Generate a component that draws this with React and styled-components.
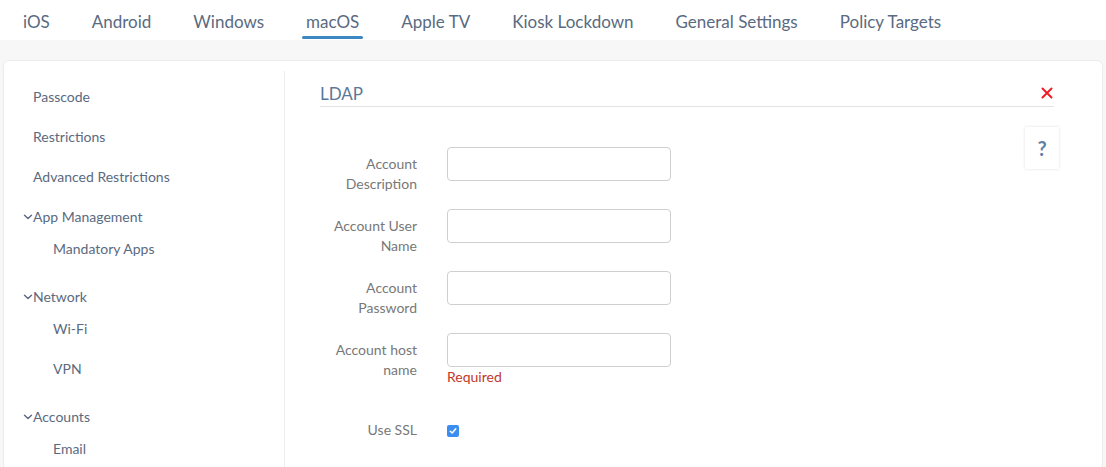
import React from "react";
import styled, { createGlobalStyle } from "styled-components";

const Global = createGlobalStyle`
  html, body { margin: 0; padding: 0; background: #f7f7f7; }
  body { font-family: Lato, "Open Sans", "Liberation Sans", sans-serif; -webkit-font-smoothing: antialiased; }
  * { box-sizing: border-box; }
`;

const Page = styled.div`
  width: 1106px;
  height: 467px;
  overflow: hidden;
  background: #f7f7f7;
  display: flex;
  flex-direction: column;
`;

const TabBar = styled.nav`
  height: 40px;
  background: #fff;
  display: flex;
  align-items: stretch;
  gap: 34px;
  padding-left: 19px;
  flex-shrink: 0;
`;

const Tab = styled.div`
  position: relative;
  padding: 3px 4px 0;
  font-size: 17px;
  line-height: 37px;
  height: 40px;
  color: #5a6a80;
  white-space: nowrap;
  &::after {
    content: "";
    display: ${(p) => (p.$active ? "block" : "none")};
    position: absolute;
    left: 0;
    right: 0;
    bottom: 1px;
    height: 3px;
    border-radius: 2px;
    background: #3d87c2;
  }
`;

const Area = styled.div`
  flex: 1;
  padding: 20px 3px 0 3px;
  display: flex;
`;

const Card = styled.div`
  flex: 1;
  min-height: 460px;
  background: #fff;
  border: 1px solid #ececec;
  border-radius: 6px;
  display: flex;
`;

const Sidebar = styled.aside`
  width: 281px;
  flex-shrink: 0;
  margin-top: 10px;
  border-right: 1px solid #ededed;
  padding: 5px 0 0 29px;
`;

const NavItem = styled.div`
  height: 40px;
  display: flex;
  align-items: center;
  font-size: 14px;
  color: #5a6a80;
  padding-left: ${(p) => (p.$sub ? "20px" : "0")};
`;

const Chevron = styled.svg`
  width: 10px;
  height: 6px;
  margin-left: -10px;
  margin-top: 1px;
  flex-shrink: 0;
`;

const SubList = styled.div`
  margin-top: -8px;
  margin-bottom: 8px;
`;

const Content = styled.section`
  flex: 1;
  display: flex;
  flex-direction: column;
  padding: 16px 0 0 35px;
`;

const Heading = styled.div`
  margin-right: 48px;
  height: 30px;
  border-bottom: 1px solid #e3e3e3;
  display: flex;
  align-items: center;
  justify-content: space-between;
  padding-top: 3px;
`;

const Title = styled.h2`
  margin: 0;
  font-size: 17px;
  font-weight: 400;
  color: #5b7898;
`;

const CloseX = styled.svg`
  width: 12px;
  height: 12px;
  margin-right: 1px;
`;

const Body = styled.div`
  display: flex;
  align-items: flex-start;
`;

const Form = styled.div`
  flex: 1;
  padding-top: 40px;
  display: flex;
  flex-direction: column;
  gap: 28px;
`;

const Row = styled.div`
  display: flex;
  align-items: flex-start;
  gap: 30px;
`;

const Label = styled.label`
  width: 97px;
  text-align: right;
  font-size: 14px;
  line-height: 20px;
  color: #787878;
  padding-top: ${(p) => p.$pt || "7px"};
  margin-bottom: -13px;
`;

const Field = styled.div`
  display: flex;
  flex-direction: column;
`;

const Input = styled.input`
  width: 224px;
  height: 34px;
  border: 1px solid #cfcfcf;
  border-radius: 4px;
  outline: none;
  font-family: inherit;
  font-size: 14px;
  padding: 0 10px;
`;

const ErrorText = styled.div`
  font-size: 14px;
  line-height: 20px;
  color: #c0392b;
`;

const Check = styled.span`
  width: 12px;
  height: 12px;
  margin-top: 10px;
  border-radius: 2px;
  background: #3b8eef;
  display: flex;
  align-items: center;
  justify-content: center;
`;

const HelpButton = styled.div`
  width: 34px;
  height: 42px;
  margin: 20px 43px 0 0;
  background: #fff;
  box-shadow: 0 0 3px rgba(0, 0, 0, 0.12);
  display: flex;
  align-items: center;
  justify-content: center;
  font-size: 20px;
  font-weight: 700;
  color: #5f80a3;
`;

const tabs = ["iOS", "Android", "Windows", "macOS", "Apple TV", "Kiosk Lockdown", "General Settings", "Policy Targets"];

const Down = () => (
  <Chevron viewBox="0 0 10 6">
    <path d="M1.5 1.2 L5 4.6 L8.5 1.2" fill="none" stroke="#5a6a80" strokeWidth="1.4" strokeLinecap="round" strokeLinejoin="round" />
  </Chevron>
);

export default function App() {
  return (
    <>
      <Global />
      <Page>
        <TabBar>
          {tabs.map((t) => (
            <Tab key={t} $active={t === "macOS"}>{t}</Tab>
          ))}
        </TabBar>
        <Area>
          <Card>
            <Sidebar>
              <NavItem>Passcode</NavItem>
              <NavItem>Restrictions</NavItem>
              <NavItem>Advanced Restrictions</NavItem>
              <NavItem><Down />App Management</NavItem>
              <SubList>
                <NavItem $sub>Mandatory Apps</NavItem>
              </SubList>
              <NavItem><Down />Network</NavItem>
              <SubList>
                <NavItem $sub>Wi-Fi</NavItem>
                <NavItem $sub>VPN</NavItem>
              </SubList>
              <NavItem><Down />Accounts</NavItem>
              <SubList>
                <NavItem $sub>Email</NavItem>
              </SubList>
            </Sidebar>
            <Content>
              <Heading>
                <Title>LDAP</Title>
                <CloseX viewBox="0 0 12 12">
                  <path d="M1.5 1.5 L10.5 10.5 M10.5 1.5 L1.5 10.5" stroke="#ee1c24" strokeWidth="2" strokeLinecap="round" />
                </CloseX>
              </Heading>
              <Body>
                <Form>
                  <Row>
                    <Label>Account Description</Label>
                    <Input />
                  </Row>
                  <Row>
                    <Label>Account User Name</Label>
                    <Input />
                  </Row>
                  <Row>
                    <Label>Account Password</Label>
                    <Input type="password" />
                  </Row>
                  <Row>
                    <Label>Account host name</Label>
                    <Field>
                      <Input />
                      <ErrorText>Required</ErrorText>
                    </Field>
                  </Row>
                  <Row>
                    <Label $pt="5px">Use SSL</Label>
                    <Check>
                      <svg width="8" height="8" viewBox="0 0 8 8">
                        <path d="M1.3 4.2 L3.2 6 L6.8 1.8" fill="none" stroke="#fff" strokeWidth="1.5" strokeLinecap="round" strokeLinejoin="round" />
                      </svg>
                    </Check>
                  </Row>
                </Form>
                <HelpButton>?</HelpButton>
              </Body>
            </Content>
          </Card>
        </Area>
      </Page>
    </>
  );
}
